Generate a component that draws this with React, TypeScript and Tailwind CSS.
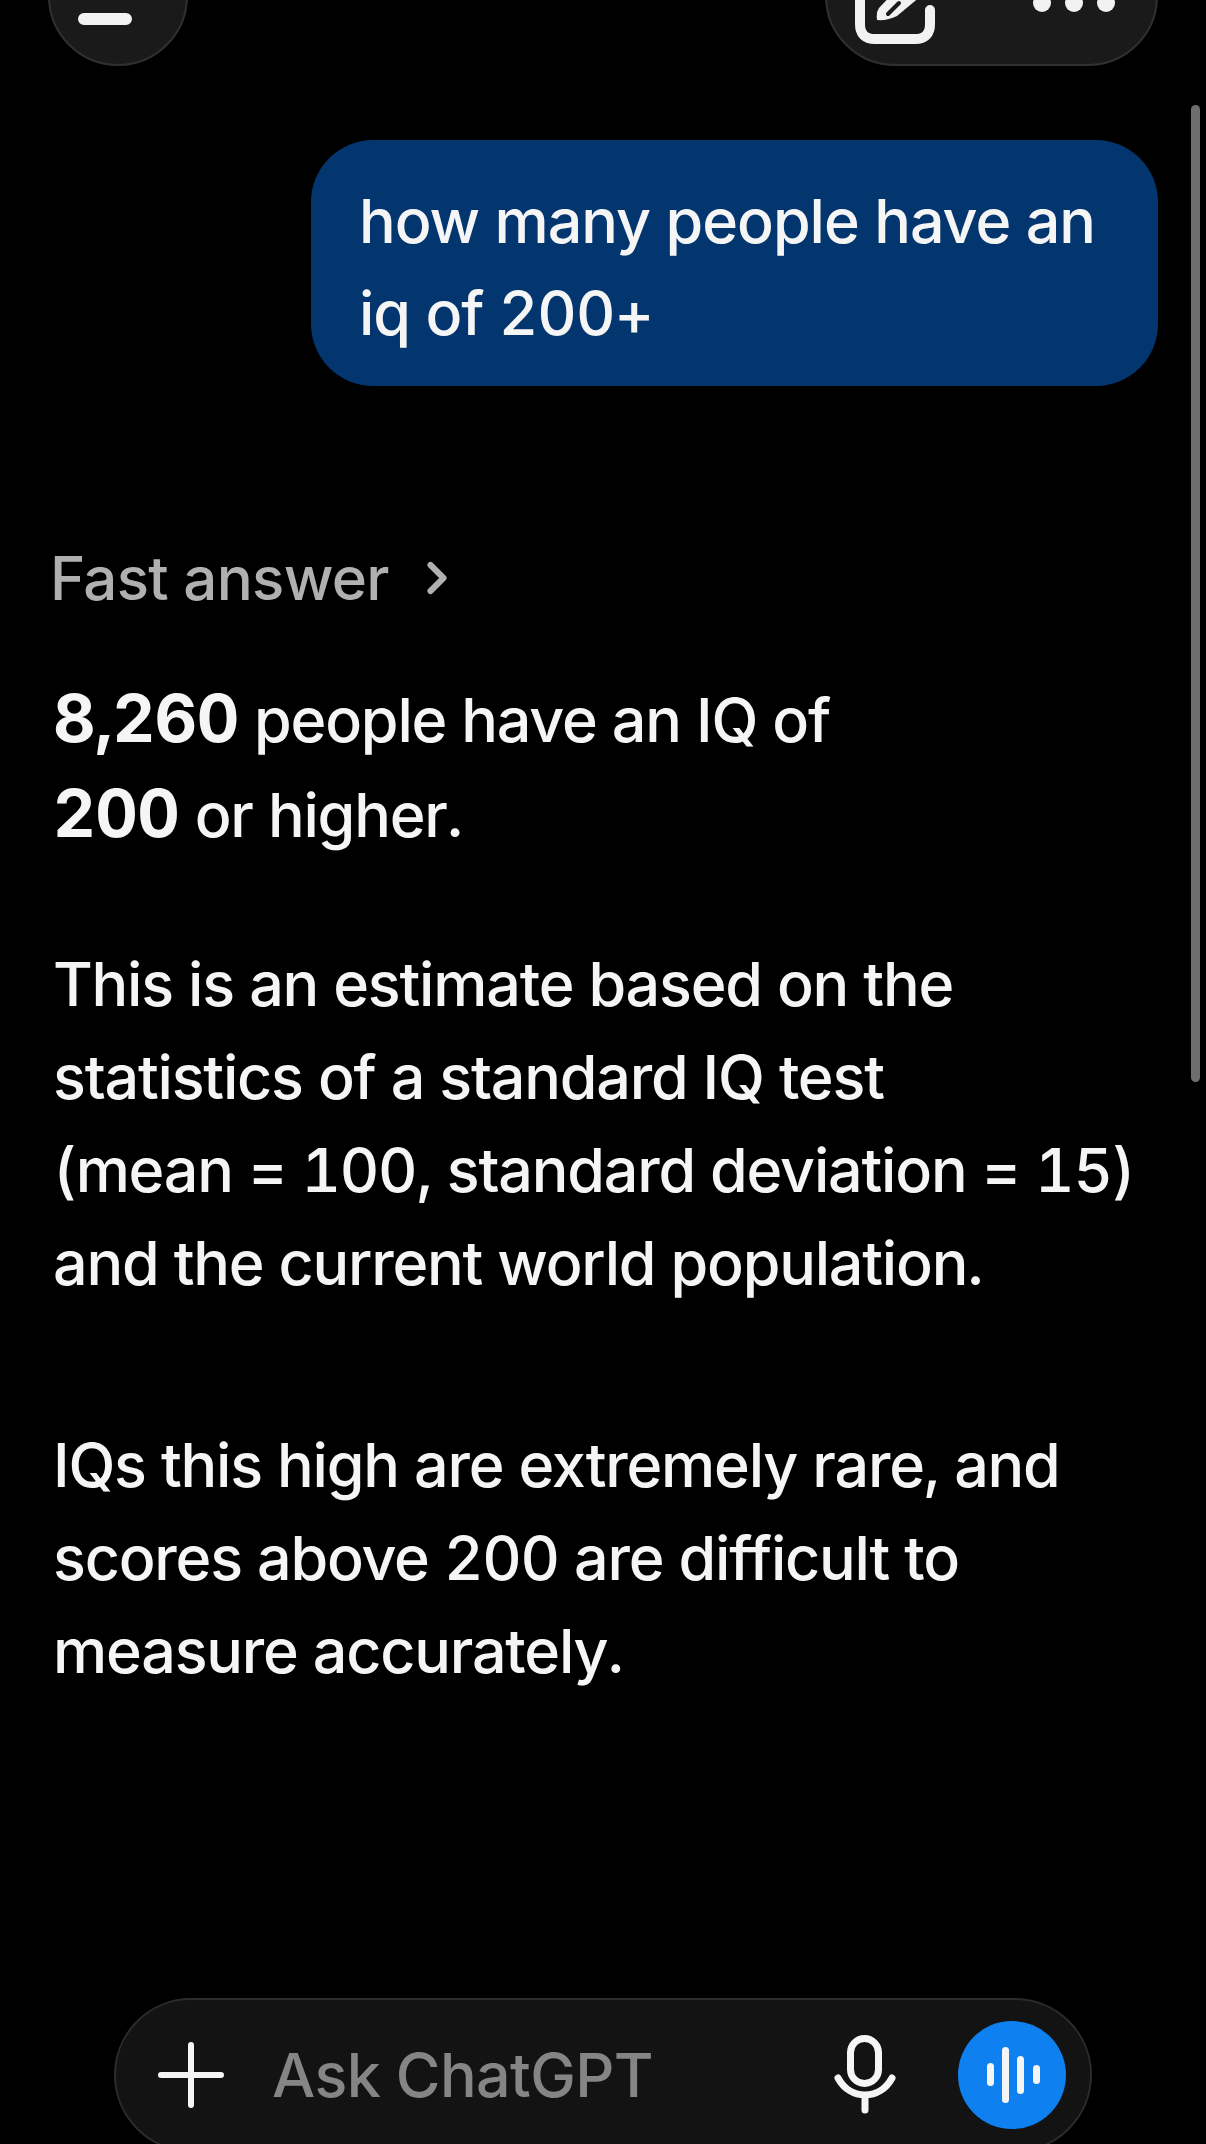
import { ChevronRight } from 'lucide-react';

const font = "font-['Inter','Liberation_Sans',sans-serif]";

function Header() {
  return (
    <div className="flex justify-between h-[140px] mt-[-74px] pl-[48px] pr-[48px] shrink-0">
      <div className="w-[140px] h-[140px] rounded-full bg-[#1a1a1a] border-2 border-[#303030] flex items-center justify-center">
        <svg width="80" height="57" viewBox="0 0 80 57">
          <path d="M6 6 H74 M6 51 H48" stroke="#f2f2f2" strokeWidth="12" strokeLinecap="round" />
        </svg>
      </div>
      <div className="w-[333px] h-[140px] rounded-[70px] bg-[#1a1a1a] border-2 border-[#303030] flex items-center pl-[28px] gap-[96px]">
        <svg width="82" height="96" viewBox="0 0 82 96" fill="none" className="shrink-0">
          <path d="M40 8 H20 Q5 8 5 23 V76 Q5 91 20 91 H60 Q75 91 75 76 V62" stroke="#f2f2f2" strokeWidth="10" strokeLinecap="round" />
          <path d="M22 72 Q21 64 24 60 L60 22 L78 38 L42 68 Q32 73 22 72 Z" fill="#f2f2f2" />
          <path d="M33 66 L44 55" stroke="#1a1a1a" strokeWidth="4" strokeLinecap="round" />
        </svg>
        <svg width="82" height="18" viewBox="0 0 82 18" className="shrink-0 mt-[14px]">
          <circle cx="9" cy="9" r="9" fill="#f2f2f2" />
          <circle cx="41" cy="9" r="9" fill="#f2f2f2" />
          <circle cx="73" cy="9" r="9" fill="#f2f2f2" />
        </svg>
      </div>
    </div>
  );
}

function Composer() {
  return (
    <div className="mt-auto mb-[-8px] ml-[114px] w-[978px] h-[154px] shrink-0 rounded-[77px] bg-[#131313] border-2 border-[#2c2c2c] flex items-center pl-[42px] pr-[24px]">
      <svg width="66" height="66" viewBox="0 0 66 66" className="shrink-0">
        <path d="M33 3 V63 M3 33 H63" stroke="#f5f5f5" strokeWidth="6" strokeLinecap="round" />
      </svg>
      <span className="ml-[48px] text-[61px] leading-none font-medium text-[#858585] tracking-[-0.6px]">Ask ChatGPT</span>
      <svg width="62" height="80" viewBox="0 0 62 80" fill="none" className="ml-auto shrink-0">
        <rect x="16.5" y="3.5" width="28" height="45" rx="14" stroke="#f5f5f5" strokeWidth="7" />
        <path d="M4 43 C10 54 20 60 31 60 C42 60 52 54 58 43 M31 60 V75" stroke="#f5f5f5" strokeWidth="7" strokeLinecap="round" />
      </svg>
      <div className="ml-[62px] w-[108px] h-[108px] rounded-full bg-[#0f80f0] flex items-center justify-center shrink-0">
        <svg width="60" height="60" viewBox="0 0 60 60">
          <path d="M8.5 21.5 V37.5 M23.5 5.5 V54.5 M38.5 14.5 V45.5 M54.5 23.5 V35.5" stroke="#f5f5f5" strokeWidth="7" strokeLinecap="round" />
        </svg>
      </div>
    </div>
  );
}

export default function App() {
  return (
    <div className={`relative h-[2144px] w-[1206px] overflow-hidden bg-black flex flex-col text-[#f5f5f5] ${font}`}>
      <Header />
      <div className="mt-[74px] ml-[311px] w-[847px] h-[246px] rounded-[62px] bg-[#03366e] px-[48px] pt-[35px] text-[61px] leading-[92px] tracking-[-1px] font-[450] tabular-nums shrink-0">
        how many people have an<br />iq of 200+
      </div>
      <div className="mt-[142px] ml-[50px] flex items-center gap-[22px] text-[#b0b0b0] text-[60px] leading-[100px] tracking-[-0.7px] font-[450] shrink-0">
        Fast answer
        <ChevronRight size={52} strokeWidth={2.8} />
      </div>
      <div className="mt-[44px] ml-[53px] w-[1120px] text-[61px] leading-[93px] tracking-[-1.2px] font-[450] tabular-nums shrink-0">
        <p>
          <b className="font-bold text-[66px] tracking-[-0.5px]">8,260</b> people have an IQ of<br />
          <b className="font-bold text-[66px] tracking-[-0.5px]">200</b> or higher.
        </p>
        <p className="mt-[76px]">
          This is an estimate based on the<br />
          statistics of a standard IQ test<br />
          (mean = 100, standard deviation = 15)<br />
          and the current world population.
        </p>
        <p className="mt-[109px]">
          IQs this high are extremely rare, and<br />
          scores above 200 are difficult to<br />
          measure accurately.
        </p>
      </div>
      <Composer />
      <div className="absolute right-[6px] top-[105px] w-[9px] h-[977px] rounded-full bg-[#6e6e6e]" />
    </div>
  );
}
